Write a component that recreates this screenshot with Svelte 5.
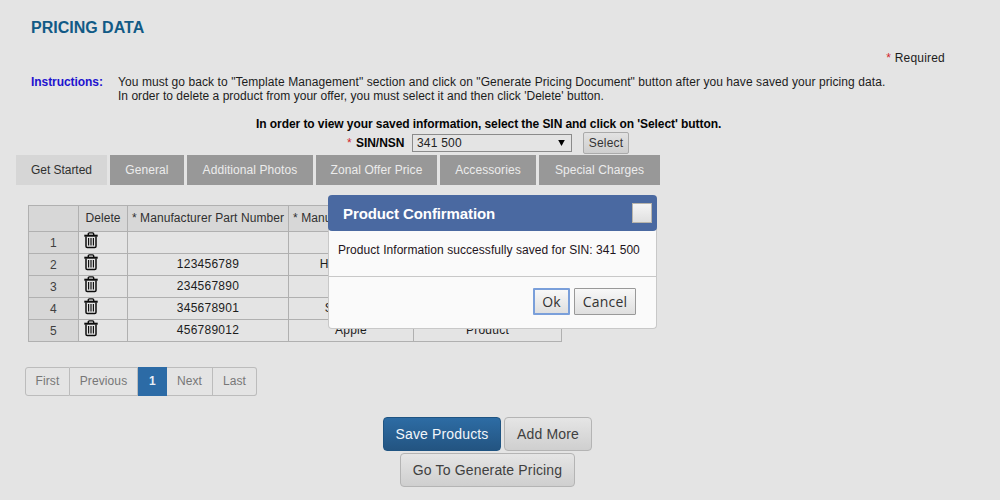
<script>
  const tabs = [
    { label: 'Get Started', width: 91 },
    { label: 'General', width: 74 },
    { label: 'Additional Photos', width: 126 },
    { label: 'Zonal Offer Price', width: 121 },
    { label: 'Accessories', width: 96 },
    { label: 'Special Charges', width: 121 }
  ];
  const columns = [50, 49, 161, 125, 148];
  const rows = [
    ['', '', ''],
    ['123456789', 'HP Monitor', ''],
    ['234567890', '', ''],
    ['345678901', 'Samsung', ''],
    ['456789012', 'Apple', 'Product']
  ];
</script>

<main>
  <h1>PRICING DATA</h1>
  <p class="required"><span class="star">*</span> Required</p>

  <section class="instructions">
    <strong>Instructions:</strong>
    <div>
      <p class="l1">You must go back to "Template Management" section and click on "Generate Pricing Document" button after you have saved your pricing data.</p>
      <p class="l2">In order to delete a product from your offer, you must select it and then click 'Delete' button.</p>
    </div>
  </section>

  <p class="hint">In order to view your saved information, select the SIN and click on 'Select' button.</p>
  <div class="sin">
    <label for="sin"><span class="star">*</span> <b>SIN/NSN</b></label>
    <div class="select" id="sin"><span>341 500</span>
      <svg width="7" height="6" viewBox="0 0 7 6"><path d="M0.2 0h6.6L3.5 6z" /></svg>
    </div>
    <button class="pick">Select</button>
  </div>

  <nav class="tabs">
    {#each tabs as tab, i}
      <div class="tab" class:active={i === 0} style:width="{tab.width}px">{tab.label}</div>
    {/each}
  </nav>

  <table>
    <colgroup>
      {#each columns as w}<col style:width="{w}px" />{/each}
    </colgroup>
    <thead>
      <tr><th></th><th>Delete</th><th>* Manufacturer Part Number</th><th class="left">* Manu</th><th></th></tr>
    </thead>
    <tbody>
      {#each rows as row, i}
        <tr>
          <td class="num">{i + 1}</td>
          <td class="del">
            <svg width="14" height="17" viewBox="0 0 14 17" fill="none" stroke="#0c0c0c">
              <path d="M4.3 3V2Q4.3 0.9 5.4 0.9h3.2Q9.7 0.9 9.7 2V3" stroke-width="1.4" />
              <path d="M0.3 3.7h13.4" stroke-width="2" />
              <path d="M2 4.5V14.3Q2 15.6 3.3 15.6h7.4Q12 15.6 12 14.3V4.5" stroke-width="1.5" />
              <path d="M4.6 6v7.6M7 6v7.6M9.4 6v7.6" stroke-width="1.15" />
            </svg>
          </td>
          {#each row as cell}<td>{cell}</td>{/each}
        </tr>
      {/each}
    </tbody>
  </table>

  <div class="pager">
    <span class="p1">First</span><span class="p2">Previous</span><span class="current">1</span><span class="p4">Next</span><span class="p5">Last</span>
  </div>

  <div class="actions">
    <div><button class="btn primary">Save Products</button><button class="btn add">Add More</button></div>
    <div><button class="btn go">Go To Generate Pricing</button></div>
  </div>

  <div class="dialog" role="dialog">
    <header><h2>Product Confirmation</h2><button class="close" aria-label="Close"></button></header>
    <p>Product Information successfully saved for SIN: 341 500</p>
    <footer><button class="ok">Ok</button><button class="cancel">Cancel</button></footer>
  </div>
</main>

<style>
  :global(body) { background: #e4e4e4; }
  main {
    position: relative;
    box-sizing: border-box;
    width: 1000px;
    height: 500px;
    overflow: hidden;
    padding-top: 18px;
    background: #e4e4e4;
    color: #1c1c1c;
    font: 12px/14px "Liberation Sans", Arial, sans-serif;
    white-space: nowrap;
  }
  p, h1, h2 { margin: 0; }
  button { box-sizing: border-box; padding: 0; margin: 0; font-family: inherit; }
  h1 { margin-left: 31px; font-size: 16px; line-height: 20px; color: #115a86; }
  .required { margin: 13px 55px 0 0; text-align: right; letter-spacing: 0.2px; }
  .star { color: #d3242c; }
  .instructions { display: flex; margin: 10px 0 0 31px; }
  .instructions strong { width: 87px; color: #1d12cf; letter-spacing: -0.06px; }
  .l1 { letter-spacing: 0.075px; }
  .l2 { letter-spacing: 0.027px; }
  .hint { margin: 14px 0 0 256px; font-weight: bold; color: #050505; letter-spacing: -0.07px; }
  .sin { display: flex; align-items: center; height: 22px; margin: 1px 0 0 347px; }
  .sin label { width: 65px; color: #050505; }
  .sin b { margin-left: 1px; letter-spacing: -0.05px; }
  .select {
    display: flex; align-items: center; justify-content: space-between;
    box-sizing: border-box; width: 160px; height: 18px;
    padding: 0 6px 0 4px; border: 1px solid #8b8b8b; color: #222;
    letter-spacing: 0.2px;
  }
  .select svg { fill: #000; }
  .pick {
    width: 46px; height: 22px; margin-left: 11px;
    border: 1px solid #aaa; border-radius: 2px;
    background: linear-gradient(#e2e2e2, #cecece);
    font-size: 12px; color: #333; letter-spacing: 0.2px;
  }
  .tabs { display: flex; gap: 3px; margin: 1px 0 0 16px; }
  .tab { height: 30px; line-height: 30px; text-align: center; background: #989898; color: #ececec; letter-spacing: 0.08px; }
  .tab.active { background: #d6d6d6; color: #303030; letter-spacing: -0.05px; }
  table {
    width: 534px; margin: 20px 0 0 28px;
    table-layout: fixed; border-collapse: collapse; text-align: center;
  }
  th, td { box-sizing: border-box; height: 22px; padding: 0; border: 1px solid #b0b0b0; overflow: hidden; }
  th { height: 26px; padding-bottom: 1px; background: #d7d7d7; font-weight: normal; color: #303030; letter-spacing: 0.08px; }
  td { padding-bottom: 2px; letter-spacing: 0.25px; }
  th.left { text-align: left; padding-left: 4px; }
  .num { padding-bottom: 0; background: #d7d7d7; color: #404040; }
  .del { text-align: left; padding: 0 0 0 5px; line-height: 0; vertical-align: top; }
  .pager {
    display: flex; width: 232px; height: 29px; margin: 25px 0 0 25px;
    color: #777; line-height: 27px; text-align: center; letter-spacing: 0.1px;
  }
  .pager span { box-sizing: border-box; height: 29px; border: 1px solid #bcbcbc; }
  .p1 { width: 45px; border-radius: 3px 0 0 3px; }
  .pager .p2 { width: 68px; border-left: 0; }
  .pager .current { width: 29px; border-color: #2c6ba6; background: #2c6ba6; color: #e8eef5; font-weight: bold; }
  .pager .p4 { width: 46px; border-left: 0; }
  .pager .p5 { width: 44px; border-left: 0; border-radius: 0 3px 3px 0; }
  .actions { display: flex; flex-direction: column; align-items: center; gap: 2px; margin: 21px 25px 0 0; }
  .actions div { display: flex; gap: 3px; }
  .btn {
    height: 34px; border: 1px solid #b4b4b4; border-radius: 4px;
    background: linear-gradient(#e5e5e5, #cfcfcf);
    color: #404040; font-size: 14px; letter-spacing: 0.15px;
  }
  .primary { width: 118px; border-color: #1f5482; background: linear-gradient(#2d6ca4, #235481); color: #f2f6fa; }
  .add { width: 88px; }
  .go { width: 175px; }
  .dialog {
    position: absolute; left: 328px; top: 195px;
    box-sizing: border-box; width: 329px; height: 134px;
    border: 1px solid #c8c8c8; border-top: 0; border-radius: 4px; background: #fafafa;
  }
  .dialog header {
    display: flex; align-items: center; justify-content: space-between;
    height: 36px; margin: 0 -1px; padding: 0 5px 0 15px; box-sizing: border-box;
    border-radius: 4px; background: #4a69a1;
  }
  h2 { padding-top: 2px; font-size: 15px; line-height: 18px; color: #fff; letter-spacing: -0.1px; }
  .close { width: 20px; height: 20px; border: 1px solid #b9b5ab; background: linear-gradient(#f5f5f5, #e0e0e0); }
  .dialog p { height: 33px; padding: 12px 0 0 9px; color: #1e1420; border-bottom: 1px solid #c8c8c8; letter-spacing: 0.055px; }
  .dialog footer { display: flex; justify-content: flex-end; gap: 4px; padding: 11px 20px 0 0; }
  .dialog footer button {
    height: 27px; border: 1px solid #999; border-radius: 1px;
    background: linear-gradient(#f8f8f8, #dfdfdf); color: #333;
    font: 14px "Open Sans", sans-serif; letter-spacing: 0.2px;
  }
  .dialog footer .ok { width: 37px; border: 2px solid #7a9fda; }
  .dialog footer .cancel { width: 62px; }
</style>
